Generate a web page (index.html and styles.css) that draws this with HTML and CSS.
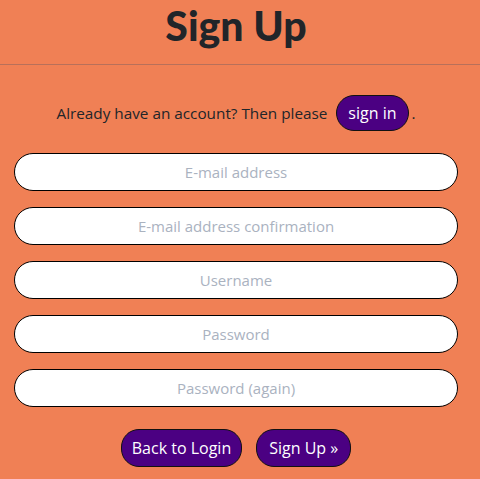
FILE: index.html
```html
<!DOCTYPE html>
<html lang="en">
  <head>
    <meta charset="UTF-8" />
    <meta name="viewport" content="width=device-width, initial-scale=1.0" />
    <title>Sign Up</title>
    <link rel="stylesheet" href="styles.css">
  </head>
  <body>
    <div class="wrap">
      <h1 class="title">Sign Up</h1>
    </div>
    <hr class="rule" />
    <div class="wrap">
      <p class="already">
        Already have an account? Then please
        <a class="pill signin" href="#">sign in</a>.
      </p>
      <form class="signupform" name="signupform" action="">
        <input type="email" name="email" placeholder="E-mail address" />
        <input type="email" name="email2" placeholder="E-mail address confirmation" />
        <input type="text" name="username" placeholder="Username" />
        <input type="password" name="password1" placeholder="Password" />
        <input type="password" name="password2" placeholder="Password (again)" />
        <div class="actions">
          <a class="pill" href="#">Back to Login</a>
          <button class="pill submit" type="submit">Sign Up &raquo;</button>
        </div>
      </form>
    </div>
  </body>
</html>
```

FILE: styles.css
```css
body {
  margin: 0;
  background-color: #f08055;
  color: #212529;
  font-family: "Open Sans", "Noto Sans", sans-serif;
  font-size: 15.3px;
}
.wrap {
  margin: 0 22px 0 14px;
}
.title {
  margin: 0;
  padding-top: 2px;
  text-align: center;
  font-family: Lato, sans-serif;
  font-size: 41px;
  font-weight: 900;
  line-height: 48px;
  height: 62px;
}
.rule {
  margin: 0;
  border: none;
  border-top: 1px solid #b8705a;
}
.already {
  margin: 30px 0 0;
  text-align: center;
  line-height: 36px;
}
.pill {
  display: inline-block;
  padding: 0 11px;
  height: 36px;
  line-height: 35px;
  box-sizing: border-box;
  background: #4b0082;
  color: #fff;
  border: 1px solid #111;
  border-radius: 18px;
  text-decoration: none;
  font-family: inherit;
  font-size: 16px;
}
.signin {
  margin: 0 3px 0 5px;
}
.signupform {
  display: flex;
  flex-direction: column;
  gap: 16px;
  margin-top: 22px;
}
.signupform input {
  height: 38px;
  box-sizing: border-box;
  border: 1px solid #000;
  border-radius: 19px;
  background: #fff;
  text-align: center;
  font-family: inherit;
  font-size: 15px;
}
.signupform input::placeholder {
  color: #aab2bf;
}
.actions {
  display: flex;
  justify-content: center;
  gap: 14px;
  margin-top: 6px;
}
.actions .pill {
  height: 38px;
  line-height: 37px;
  padding: 0 10px;
}
.actions .submit {
  padding: 0 12px;
}
```
